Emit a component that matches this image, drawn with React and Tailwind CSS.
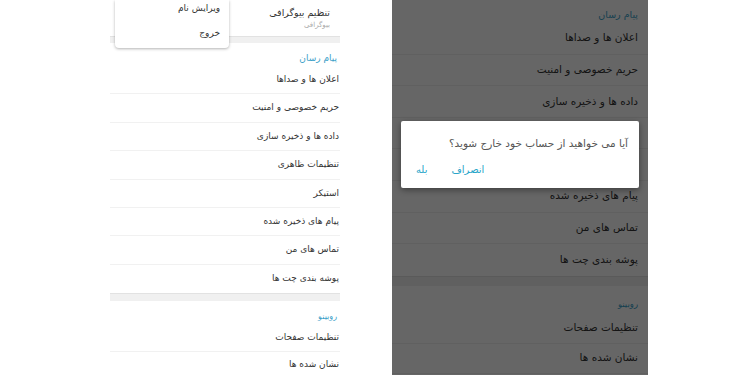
const messenger = [
  'اعلان ها و صداها',
  'حریم خصوصی و امنیت',
  'داده ها و ذخیره سازی',
  'تنظیمات ظاهری',
  'استیکر',
  'پیام های ذخیره شده',
  'تماس های من',
  'پوشه بندی چت ها',
];
const rubino = ['تنظیمات صفحات', 'نشان شده ها'];

function LeftPanel() {
  return (
    <div dir="rtl" className="relative w-[230px] h-full bg-white overflow-hidden">
      {/* bio row (scrolled) */}
      <div className="h-[36px] pr-[10px] flex flex-col justify-center items-start">
        <span className="text-[9.5px] leading-[12px] text-[#333]">تنظیم بیوگرافی</span>
        <span className="text-[7px] leading-[10px] text-[#aaa] mt-[1px]">بیوگرافی</span>
      </div>
      <div className="h-[7px] bg-[#f0f0f0] border-t border-[#e2e2e2]" />

      <div className="h-[23px] pr-[3px] flex items-center pt-[8px]">
        <span className="text-[9px] text-[#3aa0c8]">پیام رسان</span>
      </div>
      {messenger.map((item, i) => (
        <div
          key={item}
          className={`h-[28.4px] pr-[1px] flex items-center ${i < messenger.length - 1 ? 'border-b border-[#f1f1f1]' : ''}`}
        >
          <span className="text-[9px] text-[#333]">{item}</span>
        </div>
      ))}
      <div className="h-[8px] bg-[#f0f0f0] border-t border-[#e2e2e2]" />

      <div className="h-[24px] pr-[3px] flex items-center pt-[8px]">
        <span className="text-[8px] text-[#3aa0c8]">روبینو</span>
      </div>
      {rubino.map((item) => (
        <div key={item} className="h-[27px] pr-[1px] flex items-center border-b border-[#f1f1f1]">
          <span className="text-[9px] text-[#333]">{item}</span>
        </div>
      ))}

      {/* overflow menu */}
      <div className="absolute top-0 right-[111px] w-[114px] h-[48px] bg-white rounded-b-[4px] shadow-[0_1px_3px_rgba(0,0,0,0.3)] px-[9px]">
        <div className="h-[17px] flex items-center">
          <span className="text-[9px] text-[#333]">ویرایش نام</span>
        </div>
        <div className="h-[33px] flex items-center">
          <span className="text-[9px] text-[#333]">خروج</span>
        </div>
      </div>
    </div>
  );
}

function RightPanel() {
  return (
    <div dir="rtl" className="relative w-[256px] h-full bg-white overflow-hidden">
      <div className="h-[23px] px-[10px] flex items-center pt-[7px]">
        <span className="text-[9.5px] text-[#3aa0c8]">پیام رسان</span>
      </div>
      {messenger.map((item, i) => (
        <div
          key={item}
          className={`h-[31.6px] px-[10px] flex items-center ${i < messenger.length - 1 ? 'border-b border-[#f1f1f1]' : ''}`}
        >
          <span className="text-[10.5px] text-[#333]">{item}</span>
        </div>
      ))}
      <div className="h-[10px] bg-[#f0f0f0] border-t border-[#e2e2e2]" />

      <div className="h-[28px] px-[10px] flex items-center pt-[10px]">
        <span className="text-[8.5px] text-[#3aa0c8]">روبینو</span>
      </div>
      {rubino.map((item) => (
        <div key={item} className="h-[30px] px-[10px] flex items-center border-b border-[#f1f1f1]">
          <span className="text-[10.5px] text-[#333]">{item}</span>
        </div>
      ))}

      {/* dim overlay */}
      <div className="absolute inset-0 bg-black/60" />

      {/* logout dialog */}
      <div className="absolute top-[121px] left-[9px] right-[9px] h-[67px] bg-white rounded-[2px] shadow-[0_2px_6px_rgba(0,0,0,0.4)] px-[11px] pt-[15px]">
        <p className="text-[10.5px] leading-[14px] text-[#555]">آیا می خواهید از حساب خود خارج شوید؟</p>
        <div className="mt-[14px] flex justify-end items-center gap-[24px] pl-[4px] leading-[12px]">
          <span className="text-[10px] text-[#2aa5c9]">انصراف</span>
          <span className="text-[10px] text-[#2aa5c9]">بله</span>
        </div>
      </div>
    </div>
  );
}

export default function App() {
  return (
    <div className="w-[750px] h-[375px] bg-white flex pl-[110px] gap-[52px] overflow-hidden font-['DejaVu_Sans',sans-serif]">
      <LeftPanel />
      <RightPanel />
    </div>
  );
}
